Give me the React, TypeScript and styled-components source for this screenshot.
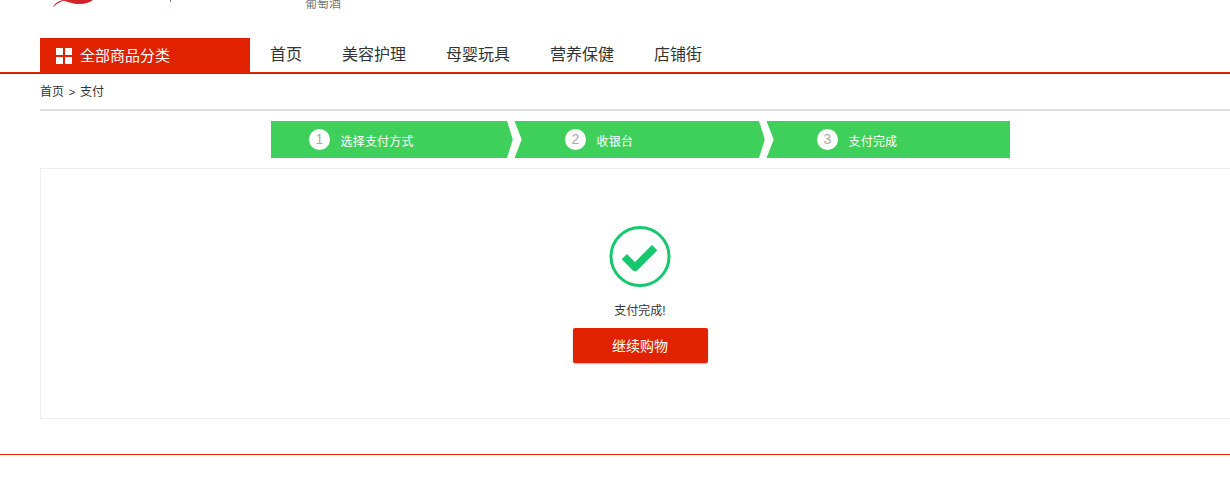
import React from "react";
import styled, { createGlobalStyle } from "styled-components";

const GlobalStyle = createGlobalStyle`
  html, body {
    margin: 0;
    padding: 0;
    background: #fff;
    overflow: hidden;
  }
  body {
    font-family: "Liberation Sans", "Noto Sans CJK SC", sans-serif;
    color: #333;
  }
`;

const Page = styled.div`
  width: 1230px;
  height: 486px;
  overflow: hidden;
`;

// Logo strip, scrolled so only its bottom edge shows
const TopStrip = styled.div`
  height: 38px;
  padding-left: 52px;
  display: flex;
  align-items: flex-start;
`;

const LogoMark = styled.svg`
  width: 125px;
  height: 10px;
  flex: none;
`;

const Category = styled.span`
  margin-left: 128px;
  margin-top: -3px;
  font-size: 12px;
  line-height: 14px;
  color: #777;
`;

const NavBar = styled.div`
  height: 34px;
  padding-left: 40px;
  display: flex;
  border-bottom: 2px solid #e02200;
`;

const AllGoods = styled.div`
  width: 210px;
  height: 34px;
  background: #e02200;
  color: #fff;
  font-size: 15px;
  display: flex;
  align-items: center;
  padding: 2px 0 0 16px;
  box-sizing: border-box;
  gap: 8px;
`;

const GridIcon = styled.svg`
  width: 16px;
  height: 16px;
  flex: none;
`;

const AllGoodsLabel = styled.span`
  line-height: 16px;
  margin-top: -1px;
`;

const NavList = styled.nav`
  display: flex;
  gap: 40px;
  margin-left: 20px;
`;

const NavLink = styled.a`
  font-size: 16px;
  line-height: 33px;
  color: #333;
`;

const Breadcrumb = styled.div`
  margin-left: 40px;
  height: 35px;
  border-bottom: 2px solid #ddd;
  font-size: 12px;
  line-height: 37px;
  color: #333;
  display: flex;
  gap: 4px;
`;

const Separator = styled.span`
  width: 8px;
  font-size: 11px;
  text-align: center;
`;

const Steps = styled.div`
  display: flex;
  width: 740px;
  height: 37px;
  margin: 10px 0 0 271px;
`;

const Step = styled.div<{ $width: number; $pad: number }>`
  position: relative;
  width: ${(p) => p.$width}px;
  height: 37px;
  flex: none;
  background: #3fd05c;
  display: flex;
  align-items: center;
  padding-left: ${(p) => p.$pad}px;
  box-sizing: border-box;
  color: #fff;
  font-size: 12px;
  letter-spacing: 0.2px;
  gap: 10.5px;
`;

const StepNumber = styled.span`
  width: 21px;
  height: 21px;
  border-radius: 50%;
  background: #fff;
  color: #aaa;
  font-size: 14px;
  line-height: 21px;
  text-align: center;
  flex: none;
`;

const StepLabel = styled.span`
  padding-top: 2px;
`;

// White chevron sitting over the seam between two steps
const Chevron = styled.svg`
  position: absolute;
  top: 0;
  right: -8px;
  width: 16px;
  height: 37px;
  z-index: 1;
`;

const ResultPanel = styled.div`
  margin: 10px 0 0 40px;
  width: 1200px;
  height: 251px;
  box-sizing: border-box;
  border: 1px solid #eee;
  display: flex;
  flex-direction: column;
  align-items: center;
  padding-top: 56px;
`;

const CheckIcon = styled.svg`
  width: 62px;
  height: 62px;
`;

const ResultText = styled.p`
  margin: 17px 0 0;
  font-size: 12px;
  line-height: 14px;
  color: #333;
`;

const ContinueButton = styled.button`
  margin-top: 10px;
  width: 135px;
  height: 35px;
  padding: 0 0 2px;
  background: #e02200;
  border: none;
  border-radius: 2px;
  box-shadow: 0 1px 2px rgba(0, 0, 0, 0.25);
  color: #fff;
  font-size: 14px;
  font-family: inherit;
`;

const Footer = styled.div`
  margin-top: 35px;
  height: 1px;
  background: #e02200;
`;

const steps = [
  { n: 1, label: "选择支付方式", width: 243, pad: 38 },
  { n: 2, label: "收银台", width: 252, pad: 51 },
  { n: 3, label: "支付完成", width: 244, pad: 51 },
];

export default function App() {
  return (
    <Page>
      <GlobalStyle />
      <TopStrip>
        <LogoMark viewBox="0 0 125 10">
          <path d="M1 7.5 C2 4 6 1 11 0 L14 0 C8 1.5 4 4 1 7.5Z" fill="#d3222a" />
          <path d="M10 0 L41 0 C35 5 24 5 16 2 C14 1.2 12 0.6 10 0Z" fill="#d3222a" />
          <rect x="118" y="0" width="1" height="2" fill="#5a86b8" />
        </LogoMark>
        <Category>葡萄酒</Category>
      </TopStrip>
      <NavBar>
        <AllGoods>
          <GridIcon viewBox="0 0 16 16">
            <rect width="7" height="7" fill="#fff" />
            <rect x="9" width="7" height="7" fill="#fff" />
            <rect y="9" width="7" height="7" fill="#fff" />
            <rect x="9" y="9" width="7" height="7" fill="#fff" />
          </GridIcon>
          <AllGoodsLabel>全部商品分类</AllGoodsLabel>
        </AllGoods>
        <NavList>
          <NavLink>首页</NavLink>
          <NavLink>美容护理</NavLink>
          <NavLink>母婴玩具</NavLink>
          <NavLink>营养保健</NavLink>
          <NavLink>店铺街</NavLink>
        </NavList>
      </NavBar>
      <Breadcrumb>
        <span>首页</span>
        <Separator>&gt;</Separator>
        <span>支付</span>
      </Breadcrumb>
      <Steps>
        {steps.map((s, i) => (
          <Step key={s.n} $width={s.width} $pad={s.pad}>
            <StepNumber>{s.n}</StepNumber>
            <StepLabel>{s.label}</StepLabel>
            {i < 2 && (
              <Chevron viewBox="0 0 16 37">
                <path d="M1 0 L8.5 0 L15.7 18.5 L8.5 37 L1 37 L6.8 18.5 Z" fill="#fff" />
              </Chevron>
            )}
          </Step>
        ))}
      </Steps>
      <ResultPanel>
        <CheckIcon viewBox="0 0 62 62">
          <circle cx="31" cy="31.5" r="29" fill="none" stroke="#17c76d" strokeWidth="3" />
          <path
            d="M18 34.3 L26 42.3 L43 25.3"
            fill="none"
            stroke="#17c76d"
            strokeWidth="7.5"
            strokeLinejoin="round"
            strokeLinecap="square"
          />
        </CheckIcon>
        <ResultText>支付完成!</ResultText>
        <ContinueButton>继续购物</ContinueButton>
      </ResultPanel>
      <Footer />
    </Page>
  );
}
